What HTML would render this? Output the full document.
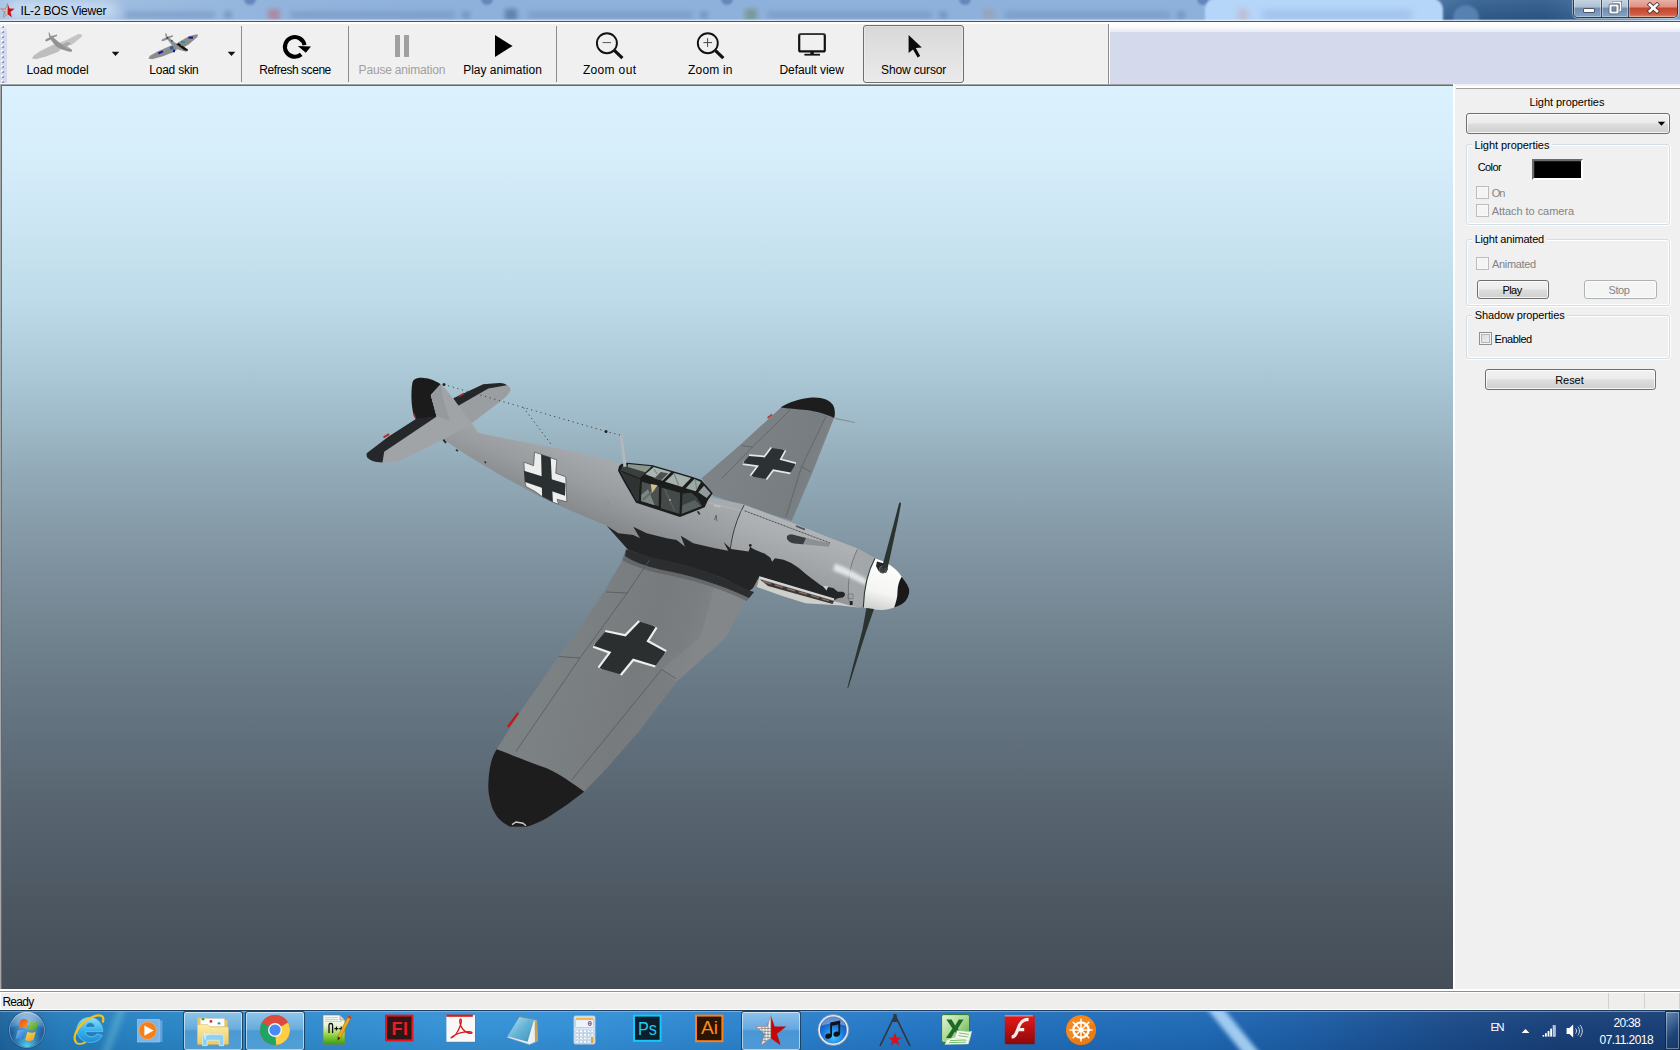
<!DOCTYPE html>
<html lang="en"><head><meta charset="utf-8"><title>IL-2 BOS Viewer</title>
<style>
html,body{margin:0;padding:0;}
body{width:1680px;height:1050px;overflow:hidden;position:relative;background:#f0f0f0;font-family:"Liberation Sans",sans-serif;font-size:12px;color:#000;}
div,span,svg{position:absolute;box-sizing:border-box;}
.t{white-space:pre;font-family:"Liberation Sans",sans-serif;}
.sep{width:1px;background:#8c8c8c;top:26px;height:56px;}
.grp{border:1px solid #d3dde6;border-radius:3px;box-shadow:inset 0 0 0 1px #fff, 0 1px 0 #fff, 1px 0 0 #fff;}
.lbl{background:#f0f0f0;height:12px;}
.btn{border:1px solid #707070;border-radius:3px;background:linear-gradient(#f2f2f2 0,#ebebeb 48%,#dddddd 52%,#cfcfcf 100%);box-shadow:inset 0 0 0 1px rgba(255,255,255,.75);}
.btn.dis{border-color:#adb2b5;background:#f4f4f4;box-shadow:inset 0 0 0 1px #fcfcfc;}
.cb{width:13px;height:13px;border:1px solid #8e8f8f;background:linear-gradient(135deg,#d4d6d8,#f3f3f3);box-shadow:inset 0 0 0 1px #f4f4f4, inset 0 0 0 2px #b4b8bd;}
.cb.dis{border-color:#bcbcbc;background:#f4f4f4;box-shadow:inset 0 0 0 1px #f8f8f8;}
.tb{top:1011px;width:60px;height:40px;border:1px solid rgba(20,50,80,.85);border-radius:3px;background:linear-gradient(180deg,rgba(205,232,252,.6) 0,rgba(160,208,242,.5) 45%,rgba(110,176,226,.46) 50%,rgba(120,186,234,.5) 100%);box-shadow:inset 0 0 0 1px rgba(255,255,255,.55);}

</style></head>
<body>
<!-- ===== Title bar ===== -->
<div id="titlebar" style="left:0;top:0;width:1680px;height:21px;background:linear-gradient(90deg,#a9c5e6 0,#9fbde1 110px,#93b5dd 260px,#8eb1db 420px,#8eb1db 1204px);overflow:hidden;">
  <div style="left:125px;top:11px;width:90px;height:8px;background:#6f8fbc;filter:blur(2.5px);opacity:.5;"></div>
  <div style="left:224px;top:11px;width:8px;height:8px;background:#6484b2;filter:blur(2px);opacity:.55;"></div>
  <div style="left:290px;top:11px;width:165px;height:8px;background:#6f8fbc;filter:blur(2.5px);opacity:.5;"></div>
  <div style="left:462px;top:11px;width:8px;height:8px;background:#6484b2;filter:blur(2px);opacity:.55;"></div>
  <div style="left:528px;top:11px;width:165px;height:8px;background:#6f8fbc;filter:blur(2.5px);opacity:.5;"></div>
  <div style="left:700px;top:11px;width:8px;height:8px;background:#6484b2;filter:blur(2px);opacity:.55;"></div>
  <div style="left:767px;top:11px;width:165px;height:8px;background:#6f8fbc;filter:blur(2.5px);opacity:.5;"></div>
  <div style="left:939px;top:11px;width:8px;height:8px;background:#6484b2;filter:blur(2px);opacity:.55;"></div>
  <div style="left:1005px;top:11px;width:165px;height:8px;background:#6f8fbc;filter:blur(2.5px);opacity:.5;"></div>
  <div style="left:1177px;top:11px;width:8px;height:8px;background:#6484b2;filter:blur(2px);opacity:.55;"></div>
  <div style="left:268px;top:9px;width:12px;height:11px;background:#b8788a;filter:blur(2.5px);opacity:.7;"></div>
  <div style="left:505px;top:9px;width:12px;height:11px;background:#4a6a9c;filter:blur(2.5px);opacity:.7;"></div>
  <div style="left:745px;top:9px;width:12px;height:11px;background:#6f8f7a;filter:blur(2.5px);opacity:.7;"></div>
  <div style="left:983px;top:9px;width:12px;height:11px;background:#9aa0b0;filter:blur(2.5px);opacity:.7;"></div>
  <div style="left:244px;top:-5px;width:12px;height:10px;border-radius:0 0 6px 6px;background:#5c80b6;filter:blur(1.2px);opacity:.85;"></div>
  <div style="left:481px;top:-5px;width:12px;height:10px;border-radius:0 0 6px 6px;background:#5c80b6;filter:blur(1.2px);opacity:.85;"></div>
  <div style="left:721px;top:-5px;width:12px;height:10px;border-radius:0 0 6px 6px;background:#5c80b6;filter:blur(1.2px);opacity:.85;"></div>
  <div style="left:959px;top:-5px;width:12px;height:10px;border-radius:0 0 6px 6px;background:#5c80b6;filter:blur(1.2px);opacity:.85;"></div>
  <div style="left:1197px;top:-5px;width:12px;height:10px;border-radius:0 0 6px 6px;background:#5c80b6;filter:blur(1.2px);opacity:.85;"></div>
  <!-- dark right side -->
  <div style="left:1436px;top:0;width:244px;height:21px;background:linear-gradient(90deg,#3f6c9d 0,#2e5b8c 40px,#2b5789 110px,#3a6797 150px,#4f7cab 200px,#86a9cf 244px);"></div>
  <div style="left:1436px;top:0;width:244px;height:21px;background:linear-gradient(180deg,rgba(255,255,255,.08),rgba(0,0,0,.06));"></div>
  <div style="left:1453px;top:5px;width:26px;height:26px;border-radius:13px;background:#5a86b6;filter:blur(1.5px);opacity:.9;"></div>
  <!-- light active tab behind glass -->
  <div style="left:1205px;top:-2px;width:238px;height:30px;border-radius:12px 12px 0 0;background:#b5d6f9;filter:blur(1.2px);"></div>
  <div style="left:1238px;top:9px;width:10px;height:12px;background:#c9a9b4;filter:blur(3px);opacity:.6;"></div>
  <div style="left:1262px;top:10px;width:150px;height:10px;background:#9fc0e6;filter:blur(3px);opacity:.8;"></div>
  <!-- title glow -->
  <div style="left:8px;top:1px;width:110px;height:18px;border-radius:9px;background:#fff;filter:blur(6px);opacity:.42;"></div>
  <!-- app icon -->
  <svg style="left:-1px;top:3px;" width="18" height="17" viewBox="0 0 18 17">
    <polygon points="8.6,0.4 10.4,5.6 15.6,5.7 11.4,9 12.9,14.3 8.6,11.2 4.3,14.3 5.8,9 1.6,5.7 6.8,5.6" fill="#d00a0e"/>
    <polygon points="8.6,0.4 8.6,11.2 4.3,14.3 5.8,9 1.6,5.7 6.8,5.6" fill="#f4f4f4" stroke="#8a8a8a" stroke-width=".5"/>
    <path d="M3,6.6h5.6M5,8.4h3.6M5.2,10.2h3.4M4.8,12h2.6M6.8,4v8M5,6v7" stroke="#808080" stroke-width=".5" fill="none"/>
  </svg>
  <span class="t" style="left:20.60px;top:5.00px;font-size:12px;line-height:12px;letter-spacing:-0.239px;color:#000;">IL-2 BOS Viewer</span>
  <!-- caption buttons -->
  <div style="left:1573px;top:-1px;width:105px;height:19px;border:1px solid #2a3a52;border-top:none;border-radius:0 0 5px 5px;box-shadow:0 0 0 1px rgba(255,255,255,.45);overflow:hidden;">
    <div style="left:0;top:0;width:28px;height:18px;background:linear-gradient(#c9d6e4 0,#aebfd3 45%,#6f8db0 50%,#86a2c2 100%);border-right:1px solid #3a4a63;box-shadow:inset 0 0 0 1px rgba(255,255,255,.35);"></div>
    <div style="left:28px;top:0;width:27px;height:18px;background:linear-gradient(#c9d6e4 0,#aebfd3 45%,#6f8db0 50%,#86a2c2 100%);border-right:1px solid #3a4a63;box-shadow:inset 0 0 0 1px rgba(255,255,255,.35);"></div>
    <div style="left:55px;top:0;width:49px;height:18px;background:linear-gradient(#ebb6aa 0,#dc9080 45%,#c4432d 50%,#cf5c44 85%,#dc8a68 100%);box-shadow:inset 0 0 0 1px rgba(255,255,255,.3);"></div>
  </div>
  <!-- minimize glyph -->
  <div style="left:1583px;top:8px;width:12px;height:5px;background:#fafafa;border:1px solid #4a5566;border-radius:1px;"></div>
  <!-- restore glyph -->
  <svg style="left:1608px;top:1px;" width="14" height="14" viewBox="0 0 14 14">
    <path d="M4.5,1.5h8v8h-3" fill="none" stroke="#4a5566" stroke-width="3.2" stroke-linejoin="round"/>
    <path d="M4.5,1.5h8v8h-3" fill="none" stroke="#fafafa" stroke-width="1.8" stroke-linejoin="round"/>
    <rect x="2.5" y="4.5" width="7" height="7" fill="none" stroke="#4a5566" stroke-width="3.6" stroke-linejoin="round"/>
    <rect x="2.5" y="4.5" width="7" height="7" fill="none" stroke="#fafafa" stroke-width="2.2" stroke-linejoin="round"/>
  </svg>
  <!-- close glyph -->
  <svg style="left:1646px;top:2px;" width="15" height="12" viewBox="0 0 15 12">
    <path d="M3.8,2.6L11,9.2M11,2.6L3.8,9.2" stroke="#53312c" stroke-width="4.2" stroke-linecap="square"/>
    <path d="M3.8,2.6L11,9.2M11,2.6L3.8,9.2" stroke="#fdfdfd" stroke-width="2.6" stroke-linecap="square"/>
  </svg>
</div>
<div style="left:0;top:19px;width:1680px;height:1px;background:rgba(235,244,255,.3);"></div>
<div style="left:0;top:20px;width:1680px;height:1px;background:rgba(232,240,250,.8);"></div>
<div style="left:0;top:21px;width:1680px;height:1px;background:#46546b;"></div>
<div style="left:0;top:22px;width:1680px;height:2px;background:#fff;"></div>

<!-- ===== Toolbar ===== -->
<div id="toolbar" style="left:0;top:24px;width:1108px;height:60px;background:#f0f0f0;"></div>
<div style="left:1108px;top:24px;width:1px;height:60px;background:#8c8c8c;"></div>
<div style="left:1109px;top:24px;width:1px;height:60px;background:#fff;"></div>
<div style="left:1110px;top:24px;width:570px;height:60px;background:linear-gradient(#fff 0,#fafbfd 3px,#e6eaf5 8px,#d4d9ec 8.5px,#d4d9ec 100%);"></div>
<!-- gripper -->
<div style="left:0;top:24px;width:7px;height:60px;background:linear-gradient(#f4f5fa 0,#d6dbee 8px,#d4d9ec 100%);"></div>
<svg style="left:0;top:24px;" width="7" height="60" viewBox="0 0 7 60">
  <defs><pattern id="grip" x="0" y="1" width="7" height="5" patternUnits="userSpaceOnUse">
    <rect x="1" y="0" width="2" height="2" fill="#fff"/><rect x="2" y="1" width="2" height="2" fill="#9197ad"/><rect x="2" y="1" width="1" height="1" fill="#c4c8d8"/></pattern></defs>
  <rect x="0" y="1" width="7" height="58" fill="url(#grip)"/>
</svg>
<!-- Load model icon -->
<svg style="left:28px;top:30px;" width="58" height="32" viewBox="28 30 58 32">
  <polygon points="32,58.6 33.5,55.8 40,51.2 53.5,44.6 60.5,46 61,49 58,52 46.5,56.2 36,59.2" fill="#bebebe"/>
  <polygon points="60,42.6 66.5,40 78.5,34 82.2,34.4 81.5,37 72,44.4 66,46.2 61,46.6" fill="#c4c4c4"/>
  <polygon points="48.6,32 50,33.5 50.6,36 53.6,35.6 56.8,34.6 57.2,36 53.4,37.6 58,41.6 61.5,44 68,47.6 71.8,49.6 72.2,51.6 69.5,51.8 62,49.6 57,47 54.5,44.4 50.6,39.4 46.5,41.4 45,40.6 46,39 49.4,37.6 48.8,35" fill="#929292"/>
  <polygon points="62,44.6 67.5,42 71,43.6 67,46 70,48.6 67,48.8" fill="#a8a8a8"/>
</svg>
<!-- Load skin icon -->
<svg style="left:145px;top:30px;" width="58" height="32" viewBox="145 30 58 32">
  <polygon points="148.4,58.6 150,55.8 158,51.2 171.8,45.2 177,47.6 176.6,50 173,52.2 163,56.2 152,59.2" fill="#8c8c8c"/>
  <polygon points="178,42.4 188.4,36.4 195.5,34.4 198,34.6 197.4,37 188.6,44.6 183.4,47.6 178,46.4" fill="#8c8c8c"/>
  <polygon points="165.4,33 166.8,34 167.2,36.6 170.4,36 172.6,35 173,36.4 169.6,38 173.6,41.6 177.5,44.4 184,48 187.6,50 187.4,51.6 185,51.4 178,49.4 173.5,47 170.6,43.6 167.6,39.6 162.6,41.2 161.2,40.4 162.6,39 166,37.6 165.2,35" fill="#909090"/>
  <polygon points="176,44 178.4,43 188,49.4 187.2,51 184,50" fill="#141414"/>
  <rect x="188.5" y="36.6" width="4.5" height="2" fill="#15159c"/><rect x="181" y="41.4" width="4" height="1.6" fill="#2b86a0"/>
  <rect x="158" y="51.6" width="5" height="2" fill="#15159c" transform="rotate(-22 160 52)"/><rect x="170" y="46.4" width="3.4" height="3" fill="#1f5f9c"/>
  <rect x="173" y="49.6" width="2" height="2.6" fill="#15159c"/><rect x="166.6" y="37.2" width="1.6" height="1.4" fill="#15159c"/><rect x="171" y="40" width="1.6" height="1.6" fill="#1a6a4a"/>
  <rect x="181" y="44.6" width="2" height="1.4" fill="#5a8a3a"/>
</svg>
<!-- dropdown arrows -->
<svg style="left:111px;top:51px;" width="9" height="6" viewBox="0 0 9 6"><polygon points="0.7,0.8 8.3,0.8 4.5,5" fill="#111"/></svg>
<svg style="left:227px;top:51px;" width="9" height="6" viewBox="0 0 9 6"><polygon points="0.7,0.8 8.3,0.8 4.5,5" fill="#111"/></svg>
<div class="sep" style="left:241px;"></div>
<div class="sep" style="left:348px;"></div>
<div class="sep" style="left:556px;"></div>
<!-- Refresh icon -->
<svg style="left:280px;top:32px;" width="34" height="30" viewBox="280 32 34 30">
  <path d="M 304.5,45.2 A 9.85 9.85 0 1 0 301.2,54.4" fill="none" stroke="#000" stroke-width="4.1"/>
  <polygon points="297.8,46 311,46.4 305.8,52.8" fill="#000"/>
</svg>
<!-- Pause icon -->
<div style="left:395px;top:35px;width:5px;height:22px;background:#a0a0a0;"></div>
<div style="left:404px;top:35px;width:5px;height:22px;background:#a0a0a0;"></div>
<!-- Play icon -->
<svg style="left:494px;top:34px;" width="20" height="24" viewBox="494 34 20 24"><polygon points="495,35 495,57 512.6,46" fill="#000"/></svg>
<!-- Zoom out icon -->
<svg style="left:594px;top:30px;" width="32" height="32" viewBox="594 30 32 32">
  <circle cx="606.9" cy="43.2" r="10" fill="none" stroke="#111" stroke-width="1.9"/>
  <path d="M614.6,50.6 L622.4,58.2" stroke="#111" stroke-width="3.2"/>
  <path d="M602.5,42.6 H611" stroke="#555" stroke-width="1"/>
</svg>
<!-- Zoom in icon -->
<svg style="left:695px;top:30px;" width="32" height="32" viewBox="695 30 32 32">
  <circle cx="707.8" cy="43.2" r="10" fill="none" stroke="#111" stroke-width="1.9"/>
  <path d="M715.5,50.6 L723.3,58.2" stroke="#111" stroke-width="3.2"/>
  <path d="M703.4,42.6 H712 M707.6,38.2 V47" stroke="#444" stroke-width="1"/>
</svg>
<!-- Monitor icon -->
<svg style="left:796px;top:31px;" width="32" height="26" viewBox="796 31 32 26">
  <rect x="799.2" y="34" width="25.6" height="17.4" rx="1.5" fill="none" stroke="#111" stroke-width="2.2"/>
  <rect x="798.4" y="33.4" width="27.2" height="1" fill="#f0f0f0" opacity=".4"/>
  <rect x="810.4" y="52" width="3.4" height="2.4" fill="#111"/>
  <rect x="804.4" y="53.8" width="15.6" height="1.8" fill="#111"/>
</svg>
<!-- Show cursor (checked button) -->
<div style="left:863px;top:25px;width:101px;height:58px;border:1px solid #6f6f6f;border-radius:3px;background:linear-gradient(#cfcfcf 0,#d9d9d9 6%,#dedede 30%,#e3e3e3 60%,#eaeaea 100%);box-shadow:inset 0 0 0 1px rgba(255,255,255,.35);"></div>
<svg style="left:905px;top:33px;" width="20" height="26" viewBox="905 33 20 26">
  <polygon points="908.6,35 908.6,53 913,49.4 917.6,57.4 920.2,56 915.8,48 921.8,47.4" fill="#0a0a0a"/>
</svg>
<span class="t" style="left:26.40px;top:64.00px;font-size:12px;line-height:12px;letter-spacing:-0.035px;color:#000;">Load model</span>
<span class="t" style="left:149.30px;top:64.00px;font-size:12px;line-height:12px;letter-spacing:-0.234px;color:#000;">Load skin</span>
<span class="t" style="left:259.30px;top:64.00px;font-size:12px;line-height:12px;letter-spacing:-0.448px;color:#000;">Refresh scene</span>
<span class="t" style="left:358.60px;top:64.00px;font-size:12px;line-height:12px;letter-spacing:-0.185px;color:#a0a0a0;">Pause animation</span>
<span class="t" style="left:463.20px;top:64.00px;font-size:12px;line-height:12px;letter-spacing:-0.001px;color:#000;">Play animation</span>
<span class="t" style="left:582.90px;top:64.00px;font-size:12px;line-height:12px;letter-spacing:0.344px;color:#000;">Zoom out</span>
<span class="t" style="left:688.00px;top:64.00px;font-size:12px;line-height:12px;letter-spacing:0.192px;color:#000;">Zoom in</span>
<span class="t" style="left:779.50px;top:64.00px;font-size:12px;line-height:12px;letter-spacing:-0.096px;color:#000;">Default view</span>
<span class="t" style="left:881.10px;top:64.00px;font-size:12px;line-height:12px;letter-spacing:-0.149px;color:#000;">Show cursor</span>
<div style="left:0;top:83px;width:1108px;height:1px;background:#f7f7f7;"></div>
<div style="left:0;top:84px;width:1453px;height:1px;background:#a2a2a2;"></div>
<div style="left:1px;top:85px;width:1452px;height:1px;background:#6a6a6a;"></div>

<!-- ===== 3D viewport ===== -->
<div style="left:0;top:84px;width:1px;height:906px;background:#a6a6a6;"></div>
<div style="left:1px;top:85px;width:1px;height:904px;background:#6a6a6a;"></div>
<div id="viewport" style="left:2px;top:86px;width:1451px;height:903px;background:linear-gradient(180deg,#dcf1fe 0%,#d6edfa 8%,#cbe5f2 16%,#bddbe9 23.7%,#a8c5d3 33.2%,#92aab8 42.7%,#8093a0 52.3%,#6f818d 61.9%,#61717d 71.4%,#56636e 81%,#4c5762 90.5%,#454e58 100%);overflow:hidden;">
<svg style="left:0;top:0;" width="1451" height="903" viewBox="2 86 1451 903">
<defs>
  <linearGradient id="gFus" gradientUnits="userSpaceOnUse" x1="676" y1="458" x2="644" y2="542">
    <stop offset="0" stop-color="#b1b5b7"/><stop offset=".3" stop-color="#a6aaad"/><stop offset=".65" stop-color="#989c9f"/><stop offset="1" stop-color="#84888b"/>
  </linearGradient>
  <linearGradient id="gCowl" gradientUnits="userSpaceOnUse" x1="815" y1="520" x2="790" y2="600">
    <stop offset="0" stop-color="#b4b8bb"/><stop offset=".35" stop-color="#a9adb0"/><stop offset=".7" stop-color="#9b9fa2"/><stop offset="1" stop-color="#84888b"/>
  </linearGradient>
  <linearGradient id="gWingR" gradientUnits="userSpaceOnUse" x1="740" y1="440" x2="830" y2="470">
    <stop offset="0" stop-color="#7d8286"/><stop offset=".7" stop-color="#787d81"/><stop offset="1" stop-color="#80858a"/>
  </linearGradient>
  <linearGradient id="gWingL" gradientUnits="userSpaceOnUse" x1="560" y1="650" x2="690" y2="690">
    <stop offset="0" stop-color="#7c8184"/><stop offset=".6" stop-color="#777b7e"/><stop offset=".85" stop-color="#7a7e81"/><stop offset="1" stop-color="#7f8386"/>
  </linearGradient>
  <linearGradient id="gSpin" gradientUnits="userSpaceOnUse" x1="885" y1="560" x2="870" y2="612">
    <stop offset="0" stop-color="#ffffff"/><stop offset=".6" stop-color="#f4f4f2"/><stop offset="1" stop-color="#c8cac8"/>
  </linearGradient>
  <filter id="blur1" x="-20%" y="-40%" width="140%" height="180%"><feGaussianBlur stdDeviation="1.6"/></filter>
</defs>

<!-- right (far) wing -->
<path d="M701.7,478.3 L740,445 L778.3,410 L781.7,406.7 L835,412 L834.2,417.5 L812.1,473.3 L791.7,521 L745,506 L713.3,496 Z" fill="url(#gWingR)"/>
<path d="M781.7,406.7 C788,402.5 800,398.6 811.7,397.5 C822,396.8 830,400 833,405 C835.2,409 835.2,413.5 834.2,418 C828,414.5 815,411 806.7,410 C797,409 788,408.5 781,407.4 Z" fill="#1d1d1e"/>
<path d="M790,410 L752.5,447 L741.5,445.5 M752.5,447 L722,478 M826,416 L801.6,466.7 L811,472 M801.6,466.7 L786,517" fill="none" stroke="#5c6165" stroke-width=".8"/>
<path d="M835,418.3 L855,422.5" stroke="#8a8f92" stroke-width="1.2"/>
<path d="M767.6,418 l4.6,-3.6" stroke="#b83a3a" stroke-width="1.8"/>
<!-- wing cross (far wing) -->
<g>
  <path d="M749.0,456.0 L764.8,457.4 L771.9,447.9 M784.8,450.0 L779.5,459.8 L795.7,464.0 M790.5,472.6 L772.9,469.3 L765.7,479.0 M751.0,476.2 L759.0,465.5 L742.9,463.3" fill="none" stroke="#e4e7e7" stroke-width="3.4" stroke-linejoin="miter"/>
  <polygon points="771.9,447.9 784.8,450.0 779.5,459.8 795.7,464.0 790.5,472.6 772.9,469.3 765.7,479.0 751.0,476.2 759.0,465.5 742.9,463.3 749.0,456.0 764.8,457.4" fill="#2c3233"/>
</g>


<!-- far horizontal stabilizer -->
<path d="M453.3,399 L483.3,384.2 L500,383 C505,383.2 509,385 510.8,389.6 C510,393 505,398 500,401.7 L471.7,423.3 L462,414 Z" fill="#9a9ea1"/>
<path d="M453.3,398.3 L483.3,384.2 L500,383 C503,383 505.5,384 506.7,385.2 L488.3,388.6 L458.3,405.8 Z" fill="#242629"/>
<path d="M458.5,396.5 l5.5,-3" stroke="#a82a2a" stroke-width="1.6"/>
<!-- rudder (black) + fin -->
<path d="M412.5,382.2 C414,378.6 418,377.6 422,377.8 C427,378 433.3,379.4 440.8,384.2 L430.8,395 L436.7,416.7 L416.7,419.4 C414,417.5 413.6,415 413.3,413.3 C411.5,406 410.6,392 412.5,382.2 Z" fill="#1b1b1c"/>
<path d="M413.5,413 l2.4,6" stroke="#a82a2a" stroke-width="1.2"/>
<path d="M440.8,384.2 L430.8,395 L436.7,416.7 L465,426.7 L471.7,423.3 L456.7,403.3 L445,388.3 Z" fill="#a0a4a7"/>
<path d="M440.8,384.2 L430.8,395 L436.7,416.7 L450,421.5 L443,398 Z" fill="#96999d"/>
<!-- near horizontal stabilizer -->
<path d="M384.2,451.7 L436.7,416.2 L466,426.2 L443.3,439.2 L401.7,460 C397,462 393,462.6 390,462.5 L382.5,462.5 Z" fill="#a0a4a7"/>
<path d="M366.7,453.3 C366.2,456 367,457.6 368.3,458.6 C370.5,460.4 373.5,461.6 376.7,462 L382.5,462.5 L384.2,451.7 L436.7,416.4 L416.7,418.6 L388.3,436.7 Z" fill="#25272a"/>
<path d="M383.5,437.5 l5.5,-3.4" stroke="#b02a2a" stroke-width="2"/>

<!-- fuselage -->
<path id="fus" d="M471.7,423.3 L476,429.5 C477.5,432 479,433 482,433.8 L516.7,440.8 L566.7,450 L600,457.5 L619.2,463.3 L660,470 L706.7,496.7 L743.3,504.2 L793.3,523.3 L830,538 L856.7,548.3 L875,558.3 L869,580 L863.3,607.5 L841.7,605.2 L805.5,603.1 L781.7,595.5 L768.3,590.7 L756.9,586.9 L753.1,587.9 L748.3,591.7 L723.3,578.3 L690,566.7 L656.7,560 L628.3,550 L606.7,525.8 L573.3,511.7 L540,496.7 L500,475 L466.7,455 L443.3,439.2 L465,426.7 Z" fill="url(#gFus)"/>
<!-- cowling (front of panel arc) lighter -->
<path d="M744.2,505 L793.3,523.3 L830,538 L856.7,548.3 L875,558.3 L869,580 L863.3,607.5 L841.7,605.2 L805.5,603.1 L781.7,595.5 L768.3,590.7 L756.9,586.9 L753.1,587.9 L748.3,591.7 L729.2,563.3 C729.5,548 733,525 744.2,505 Z" fill="url(#gCowl)"/>
<!-- cowl ring -->
<path d="M857.5,549.2 L875,558.3 C869,572 865,592 863.3,607.5 L850,605.6 C846.5,590 848.5,566 857.5,549.2 Z" fill="#a3a7aa"/>
<path d="M857.5,549.2 C848.5,566 846.5,590 850,605.6" fill="none" stroke="#6f7477" stroke-width=".9"/>
<path d="M835,563.600 C845,567 856,573 867,579.600 L865.600,585.600 C854,579.600 843,574 833,570.600 Z" fill="#f4f6f6" opacity=".78" filter="url(#blur1)"/>
<path d="M744.2,505 C733,525 729.5,548 729.2,563.3" fill="none" stroke="#3c4042" stroke-width="1"/>
<!-- black flame camouflage -->
<path d="M606.7,525.8 L618.3,533.3 L633.3,535 L640,538.3 L633.3,526.7 L646.7,533.3 L666.7,538.3 L676.7,540 L685,546.7 L680.8,535.8 L693.3,543.3 L715,548.3 L728.3,550.7 L723.6,542.1 L731,549 L748.6,551.4 L750.2,546.6 L751.7,547.9 L755,549.8 L764.5,553.6 L770.2,557.4 L772.1,561.7 L775,558.3 L783.6,559.8 L791.2,563.1 L798.8,567.9 L806.4,574.5 L814,580.2 L821.7,586 L833.1,587.9 L837.9,591.7 L842.6,591.7 C844.4,592.4 845,593.4 845,594.5 C844.8,596 844,597 842.6,597.4 L837.9,598.3 L834,600.2 L759.3,576.4 L753.1,587.9 L748.3,591.7 L723.3,578.3 L690,566.7 L656.7,560 L628.3,550 Z" fill="#232425"/>
<circle cx="750.3" cy="545.4" r="1.4" fill="#232425"/>
<polygon points="822.6,586 828.4,586 826.6,590.6" fill="#c9cccb"/>
<!-- wing-root shadow -->
<path d="M628.3,550 L656.7,560 L690,566.7 L723.3,578.3 L748.3,591.7 L752.9,593 L746,601 L720,589 L688,577 L655,569 L627,556 Z" fill="#2a2b2c"/>
<!-- belly -->
<path d="M759,579 L834,601 L850,605.6 L861.7,607.9 L841.7,605.4 L805.5,603.3 L781.7,595.700 L768.3,590.900 L756.9,587.100 Z" fill="#cdd0ca"/>
<!-- exhaust stacks -->
<path d="M759.4,576.2 L834.4,598.4 L833.8,600.6 L759,578.6 Z" fill="#d4d7d4"/>
<path d="M760,579.4 L834,601 L832.6,604 L768,586 Z" fill="#3c3634"/>
<path d="M763,581.4 l8,2.4 M775,585 l8,2.4 M787,588.6 l8,2.4 M799,592 l8,2.4 M811,595.4 l8,2.400 M822,598.8 l7,2" stroke="#8a6e64" stroke-width="1.4"/>
<path d="M848,594 h5 v4.6 h-5 z" fill="none" stroke="#6c7073" stroke-width=".7"/>
<rect x="850" y="601" width="2.6" height="4" fill="#222"/>
<!-- gun trough -->
<path d="M787,536.4 C788.4,534.4 791.6,534 796,535.4 L830,543.6 L829,546.8 L795,543.6 C790,542.6 786,540 787,536.4 Z" fill="#8c9093"/>
<path d="M787,536.4 C788.4,534.4 791.6,534 796,535.4 L806,538 L803,544.2 L795,543.6 C790,542.6 786,540 787,536.4 Z" fill="#3a3d3f"/>
<path d="M744.6,510.8 L830,543" fill="none" stroke="#3e4244" stroke-width=".9" stroke-dasharray="2.2 1"/>
<path d="M796,526 l9,3.6" stroke="#4a4e50" stroke-width="1.6"/>
<path d="M706,502 l36,9" fill="none" stroke="#c9cccd" stroke-width=".6" stroke-dasharray="1.4 1.2"/>
<rect x="714" y="504" width="7" height="2.4" fill="#b9bdbf" transform="rotate(12 714 504)"/>
<path d="M714.6,520 l1.6,-5 l.6,6" fill="none" stroke="#5d6a5a" stroke-width="1"/>
<path d="M711,517.6 l1.6,.8" stroke="#d89a9a" stroke-width="1.2"/>
<path d="M697.6,511.4 l2.2,3" stroke="#222" stroke-width="1.6"/>
<!-- tail details -->
<path d="M484.6,461.4 l1.4,1.6" stroke="#2a2a2a" stroke-width="1.4"/>
<path d="M443.3,439.6 L446,443" fill="none" stroke="#2b2b2c" stroke-width="2"/><path d="M456,449.6 l2,1.6" stroke="#2b2b2c" stroke-width="1.6"/>
<circle cx="607" cy="504" r="2.6" fill="none" stroke="#8b8f92" stroke-width=".8"/>

<!-- fuselage cross -->
<g>
  <polygon points="523.9,462.1 533.6,465.7 534.6,452.1 556.8,460 555.7,473.2 565.700,476.8 566.8,501.8 557.1,499.3 558.6,504.3 552.9,502.1 542.1,496.4 535,491.4 526,486.4 525,482.1" fill="#eceeee" stroke="#3a3e40" stroke-width=".6"/>
  <polygon points="541.1,454.6 550.7,457.5 552.9,502.1 542.1,496.4" fill="#2a3031"/>
  <polygon points="523.9,470.7 565.4,483.6 565,495.700 525,482.1" fill="#2a3031"/>
</g>

<!-- canopy -->
<polygon points="618.0,470.7 619.0,466.3 621.3,464.0 627.3,462.7 652.7,465.3 673.3,471.3 692.7,477.0 701.3,480.0 706.7,486.0 712.7,493.3 708.0,500.0 704.7,507.3 680.0,517.0 636.0,502.7 623.3,480.7" fill="#1b1d1d"/>
<polygon points="620.3,471.3 622.3,466.3 628.0,465.0 650.7,467.7 640.0,478.0 638.3,501.3 636.7,500.7 625.0,480.0" fill="#3a3e3d"/>
<polygon points="628.0,464.0 651.7,466.3 645.3,472.3 628.0,467.0" fill="#8a968d"/>
<polygon points="622.3,472.0 639.3,478.7 638.3,501.3 636.7,500.7 625.0,480.0" fill="#2f3332"/>
<path d="M621.3,471.3 L640.0,478.7" stroke="#1b1d1d" stroke-width="1.2"/>
<polygon points="645.3,474.3 653.7,467.0 671.0,472.0 662.3,480.7" fill="#a9b5b0"/>
<polygon points="654.0,478.7 660.7,472.0 668.3,473.2 661.3,480.3" fill="#4c5150"/>
<polygon points="665.0,481.7 674.3,473.0 691.0,478.0 682.3,487.0" fill="#a6b2ae"/>
<polygon points="685.7,488.3 694.3,479.0 701.0,482.0 695.7,491.3" fill="#9ca8a4"/>
<polygon points="698.3,492.3 704.0,485.7 710.7,493.3 706.7,498.0" fill="#8f9c99"/>
<path d="M654.0,469.3 L657.3,474.0 M674.0,473.3 L678.7,485.3 M695.3,480.0 L696.7,489.3" stroke="#7d8986" stroke-width="1.300" fill="none"/>
<polygon points="641.9,481.7 659.0,486.8 658.7,506.3 641.0,501.0" fill="#4b5150"/>
<polygon points="641.3,494.7 648.0,489.3 654.7,505.3 641.1,501.0" fill="#7c8683"/>
<path d="M642.7,500.0 L654.7,489.3" stroke="#646c6a" stroke-width="2.2"/>
<polygon points="650.7,484.0 657.7,485.3 652.0,492.7" fill="#d1bd8a"/>
<polygon points="661.5,487.5 680.2,492.8 679.5,514.0 660.9,508.3" fill="#444a49"/>
<path d="M664.7,489.3 L674.7,510.7" stroke="#5a6261" stroke-width="1.200"/>
<rect x="669.0" y="499.0" width="1.800" height="1.800" fill="#b8a67e"/>
<polygon points="682.5,493.5 691.3,492.8 696.7,497.3 702.3,506.0 681.5,514.0" fill="#3b4140"/>
<polygon points="682.5,505.3 694.7,500.0 701.3,506.0 681.7,513.7" fill="#59615f"/>

<!-- antenna mast and wires -->
<path d="M620,435.4 L622.4,435.2 L626.6,466.6 L623.4,467 Z" fill="#b4b8ba"/>
<path d="M443.5,384.4 L606,431.4 L620.8,435.2" fill="none" stroke="#33373a" stroke-width=".9" stroke-dasharray="1.2 3.6"/>
<path d="M523.4,407.6 L551.7,445" fill="none" stroke="#33373a" stroke-width=".9" stroke-dasharray="1.2 3.2"/>
<circle cx="444" cy="384.6" r="1.5" fill="#222"/><circle cx="606" cy="431.4" r="1.5" fill="#222"/>

<!-- left (near) wing -->
<path d="M627.2,552 L650.7,559.6 L690,568.6 L723,580.6 L748,593.4 L752.9,593 L743.1,604.8 L725.4,638.2 L676.5,681.7 L640,730 L606.7,768.3 L584.2,791.7 L566.7,805 L546.7,818.3 C538,823 530,826 526.7,826.7 L510,826.7 C505,824.5 501,821.5 498.3,818.3 C494,813 491.5,806.5 490.8,803.3 C488.5,795 488,789 488.3,783.3 C488.6,776 489.5,769 490.8,763.3 C492,758 494,753.5 496.7,749.2 L519.7,712.5 L558.4,656.9 L581.7,625 L605.6,589.1 Z" fill="url(#gWingL)"/>
<path d="M716.4,577.8 L748,593.4 L752.9,593 L743.1,604.8 L725.4,638.2 L676.5,681.7 L661.6,669.4 L701.2,636 Z" fill="#909497" opacity=".28"/>
<path d="M626,549.4 L650.7,557.2 L690,566.2 L723,578.2 L749,590.600 L754,592 L746.5,601 C720,588 690,579.5 660,573.6 C645,570 630,565 622,560 Z" fill="#4a4d50" opacity=".45"/>
<path d="M626,549.4 L650.7,557.2 L690,566.2 L723,578.2 L749,590.600 L754,592 L749,598 C720,584 690,575 660,569.4 C645,566 633,561.4 625,556 Z" fill="#2b2d2f"/>
<!-- wing tip black -->
<path d="M496.7,749.2 C505,752 512,755 520,758.3 C529,762 538,765 546.7,768.3 C555,772 563,777 570,781.7 C575,785 580,788.5 584.2,791.7 L566.7,805 L546.7,818.3 C538,823 530,826 526.7,826.7 L510,826.7 C505,824.5 501,821.5 498.3,818.3 C494,813 491.5,806.5 490.8,803.3 C488.5,795 488,789 488.3,783.3 C488.6,776 489.5,769 490.8,763.3 C492,758 494,753.5 496.7,749.2 Z" fill="#1d1d1e"/>
<path d="M512,824.6 l4,-2.6 l7,1.2 l3,2.6" fill="none" stroke="#c9cdc9" stroke-width="1.4"/>
<!-- wing panel lines -->
<path d="M649.8,559.6 L627.2,593 L606,592 M627.2,593 L580,657.9 L558.6,656.6 M580,657.9 L515.8,751.7" fill="none" stroke="#55595c" stroke-width=".8"/>
<path d="M661.6,669.4 L676,678.6 M661.6,669.4 L571.7,780" fill="none" stroke="#55595c" stroke-width=".8"/>
<path d="M518.2,712.8 L508,727" stroke="#c11a1a" stroke-width="2.2"/>
<!-- near wing cross -->
<g>
  <path d="M605.0,632.1 L625.7,636.4 L640.0,621.8 M655.7,626.8 L646.4,641.4 L665.7,652.1 M655.7,665.4 L632.9,658.6 L620.0,674.3 M599.3,668.2 L611.4,652.1 L593.6,645.7" fill="none" stroke="#eceeee" stroke-width="4.4" stroke-linejoin="miter"/>
  <polygon points="640.0,621.8 655.7,626.8 646.4,641.4 665.7,652.1 655.7,665.4 632.9,658.6 620.0,674.3 599.3,668.2 611.4,652.1 593.6,645.7 605.0,632.1 625.7,636.4" fill="#2b2f30"/>
</g>


<!-- spinner -->
<path d="M875,558.3 C880,560 886,562.6 890,565 C895,568.4 899,572.6 901.7,576.7 C905,581 907.5,584.4 908.3,586.7 C909.6,589.4 909.6,591.6 909.2,593.3 C908.4,597 907,599.6 905,601.7 C902,604.6 898,606.4 894.2,607.5 C890,609 886,609.8 881.7,610 C875,610 869,609 863.3,607.5 C863.8,592 867.5,572 875,558.3 Z" fill="url(#gSpin)"/>
<path d="M901.7,576.7 C905,581 907.5,584.4 908.3,586.7 C909.6,589.4 909.6,591.6 909.2,593.3 C908.4,597 907,599.6 905,601.7 C902,604.6 898,606.4 894.2,607.5 C896,602 897.6,597 897.5,591.7 C897.6,586 899,581 901.7,576.7 Z" fill="#19191a"/>
<path d="M875,558.3 C867.5,572 863.8,592 863.3,607.5" fill="none" stroke="#2a3a2e" stroke-width="1.1"/>
<!-- prop hub & blades -->
<path d="M877,561.6 L884,563.6 L888,569 L886,573 L878.6,571 L876,566 Z" fill="#222425"/>
<circle cx="882.8" cy="569.6" r="3.6" fill="#3a3e3e" stroke="#6a6e6e" stroke-width=".8"/>
<path d="M900.4,502 L901,504 L898,520 L887.6,568.6 L881.8,568 L893.4,525 L899,503.4 Z" fill="#2b3331"/>
<path d="M866.4,608 L874,609 L865.6,633.3 L852,676 L848,688.4 L847.4,687.6 L852.4,668 L862.4,630 Z" fill="#2b3331"/>
</svg>
</div>
<div style="left:1453px;top:84px;width:2px;height:906px;background:#fff;"></div>

<!-- ===== Right panel ===== -->
<div id="panel" style="left:1455px;top:84px;width:225px;height:906px;background:#f0f0f0;"></div>
<div style="left:1456px;top:86px;width:1224px;height:2px;background:#fff;"></div>
<div style="left:1456px;top:88px;width:224px;height:1px;background:#a0a0a0;"></div>
<span class="t" style="left:1529.40px;top:97.00px;font-size:11px;line-height:11px;letter-spacing:-0.055px;color:#000;">Light properties</span>
<!-- combo -->
<div class="btn" style="left:1466px;top:113px;width:204px;height:21px;"></div>
<svg style="left:1657px;top:121px;" width="9" height="6" viewBox="0 0 9 6"><polygon points="0.8,0.8 8.2,0.8 4.5,4.8" fill="#000"/></svg>
<!-- group 1 -->
<div class="grp" style="left:1466px;top:144px;width:204px;height:81px;"></div>
<div class="lbl" style="left:1472px;top:140px;width:80px;"></div>
<span class="t" style="left:1474.40px;top:140.00px;font-size:11px;line-height:11px;letter-spacing:-0.055px;color:#000;">Light properties</span>
<span class="t" style="left:1477.70px;top:162.00px;font-size:11px;line-height:11px;letter-spacing:-0.572px;color:#000;">Color</span>
<div style="left:1532px;top:159px;width:51px;height:21px;background:#000;border:2px solid;border-color:#6b6b6b #fff #fff #6b6b6b;box-shadow:inset 1px 1px 0 #1a1a1a;"></div>
<div class="cb dis" style="left:1476px;top:186px;"></div>
<span class="t" style="left:1491.80px;top:188.00px;font-size:11px;line-height:11px;letter-spacing:-1.174px;color:#838383;">On</span>
<div class="cb dis" style="left:1476px;top:204px;"></div>
<span class="t" style="left:1491.80px;top:206.00px;font-size:11px;line-height:11px;letter-spacing:-0.063px;color:#838383;">Attach to camera</span>
<!-- group 2 -->
<div class="grp" style="left:1466px;top:239px;width:204px;height:67px;"></div>
<div class="lbl" style="left:1472px;top:234px;width:75px;"></div>
<span class="t" style="left:1474.70px;top:234.00px;font-size:11px;line-height:11px;letter-spacing:-0.205px;color:#000;">Light animated</span>
<div class="cb dis" style="left:1476px;top:257px;"></div>
<span class="t" style="left:1492.00px;top:259.00px;font-size:11px;line-height:11px;letter-spacing:-0.324px;color:#838383;">Animated</span>
<div class="btn" style="left:1477px;top:280px;width:72px;height:19px;"></div>
<span class="t" style="left:1502.40px;top:285.00px;font-size:11px;line-height:11px;letter-spacing:-0.533px;color:#000;">Play</span>
<div class="btn dis" style="left:1584px;top:280px;width:73px;height:19px;"></div>
<span class="t" style="left:1608.40px;top:285.00px;font-size:11px;line-height:11px;letter-spacing:-0.343px;color:#838383;">Stop</span>
<!-- group 3 -->
<div class="grp" style="left:1466px;top:315px;width:204px;height:44px;"></div>
<div class="lbl" style="left:1472px;top:310px;width:95px;"></div>
<span class="t" style="left:1474.70px;top:310.00px;font-size:11px;line-height:11px;letter-spacing:-0.108px;color:#000;">Shadow properties</span>
<div class="cb" style="left:1479px;top:332px;"></div>
<span class="t" style="left:1494.60px;top:334.00px;font-size:11px;line-height:11px;letter-spacing:-0.462px;color:#000;">Enabled</span>
<div class="btn" style="left:1485px;top:369px;width:171px;height:21px;"></div>
<span class="t" style="left:1555.20px;top:375.00px;font-size:11px;line-height:11px;letter-spacing:-0.059px;color:#000;">Reset</span>

<!-- ===== Status bar ===== -->
<div style="left:0;top:989px;width:1680px;height:2px;background:#fff;"></div>
<div style="left:0;top:991px;width:1680px;height:1px;background:#8f8f8f;"></div>
<div style="left:0;top:992px;width:1680px;height:1px;background:#fff;"></div>
<div id="status" style="left:0;top:993px;width:1680px;height:16px;background:#f0eded;"></div>
<div style="left:0;top:993px;width:1px;height:16px;background:#fff;"></div>
<div style="left:1608px;top:993px;width:1px;height:16px;background:#d2d0d0;"></div>
<div style="left:1644px;top:993px;width:1px;height:16px;background:#d2d0d0;"></div>
<div style="left:1679px;top:993px;width:1px;height:16px;background:#d2d0d0;"></div>
<div style="left:0;top:1009px;width:1680px;height:1px;background:#fff;"></div>
<span class="t" style="left:2.40px;top:996.00px;font-size:12px;line-height:12px;letter-spacing:-0.722px;color:#000;">Ready</span>

<!-- ===== Taskbar ===== -->
<div id="taskbar" style="left:0;top:1010px;width:1680px;height:40px;background:linear-gradient(90deg,#1d639c 0,#247cbb 60px,#2a87c7 200px,#3591d5 450px,#328ed5 600px,#2a81cc 760px,#2476c4 900px,#206dba 1050px,#1e68b4 1200px,#1c5ba2 1320px,#1a4a88 1450px,#183f78 1560px,#173d75 1680px);overflow:hidden;">
  <div style="left:0;top:0;width:1680px;height:40px;background:linear-gradient(180deg,rgba(255,255,255,.05) 0,rgba(255,255,255,.01) 45%,rgba(0,0,0,.06) 100%);"></div>
  <!-- light streaks -->
  <div style="left:109px;top:-12px;width:8px;height:70px;background:rgba(150,225,225,.28);transform:rotate(20deg);filter:blur(2.5px);"></div>
  <div style="left:1226px;top:-25px;width:13px;height:90px;background:rgba(176,216,250,.88);transform:rotate(-39deg);filter:blur(2.2px);"></div>
  
  <div style="left:0;top:0;width:1680px;height:1px;background:#1b3f63;"></div>
  <div style="left:0;top:1px;width:1680px;height:1px;background:rgba(160,205,240,.55);"></div>
</div>
<!-- active / running task buttons -->
<div class="tb" style="left:183px;"></div>
<div class="tb" style="left:245px;"></div>
<div class="tb" style="left:741px;"></div>
<svg style="left:0;top:1010px;" width="1680" height="40" viewBox="0 1010 1680 40">
<defs>
  <radialGradient id="orbG" cx=".5" cy=".35" r=".7"><stop offset="0" stop-color="#6fb4e6"/><stop offset=".55" stop-color="#2a6fb0"/><stop offset="1" stop-color="#123d6e"/></radialGradient>
  <radialGradient id="orbGlow" cx=".5" cy="1" r=".6"><stop offset="0" stop-color="#5fe0ff" stop-opacity=".95"/><stop offset="1" stop-color="#2aa0e0" stop-opacity="0"/></radialGradient>
  <linearGradient id="orbHi" x1="0" y1="0" x2="0" y2="1"><stop offset="0" stop-color="#fff" stop-opacity=".75"/><stop offset="1" stop-color="#fff" stop-opacity=".12"/></linearGradient>
  <linearGradient id="fR" x1="0" y1="0" x2="1" y2="1"><stop offset="0" stop-color="#e8441c"/><stop offset="1" stop-color="#f6a21c"/></linearGradient>
  <linearGradient id="fG" x1="0" y1="0" x2="1" y2="1"><stop offset="0" stop-color="#a6cf4a"/><stop offset="1" stop-color="#3f9b35"/></linearGradient>
  <linearGradient id="fB" x1="0" y1="0" x2="1" y2="1"><stop offset="0" stop-color="#7ac0f0"/><stop offset="1" stop-color="#2a6ec6"/></linearGradient>
  <linearGradient id="fY" x1="0" y1="0" x2="1" y2="1"><stop offset="0" stop-color="#ffd84a"/><stop offset="1" stop-color="#f29a1c"/></linearGradient>
  <linearGradient id="ieG" x1="0" y1="0" x2="0" y2="1"><stop offset="0" stop-color="#8fe0fb"/><stop offset=".5" stop-color="#39b4ee"/><stop offset="1" stop-color="#1b8bd6"/></linearGradient>
  <linearGradient id="fold" x1="0" y1="0" x2="0" y2="1"><stop offset="0" stop-color="#fbeeb0"/><stop offset="1" stop-color="#edc95e"/></linearGradient>
  <linearGradient id="npG" x1="0" y1="0" x2="0" y2="1"><stop offset="0" stop-color="#ffffff"/><stop offset=".35" stop-color="#e8f4d8"/><stop offset=".7" stop-color="#8fd03a"/><stop offset="1" stop-color="#2f9e18"/></linearGradient>
  <linearGradient id="flG" x1="0" y1="0" x2="0" y2="1"><stop offset="0" stop-color="#e81818"/><stop offset="1" stop-color="#8a0a0a"/></linearGradient>
  <linearGradient id="nbG" x1="0" y1="0" x2="1" y2="1"><stop offset="0" stop-color="#bfe6f4"/><stop offset=".5" stop-color="#66b4d6"/><stop offset="1" stop-color="#3f8fba"/></linearGradient>
  <radialGradient id="itG" cx=".5" cy=".75" r=".8"><stop offset="0" stop-color="#48c4ff"/><stop offset=".5" stop-color="#1c78dc"/><stop offset="1" stop-color="#0c3c9c"/></radialGradient>
  <linearGradient id="xlG" x1="0" y1="0" x2="1" y2="1"><stop offset="0" stop-color="#e6f4dc"/><stop offset=".5" stop-color="#a8d890"/><stop offset="1" stop-color="#4aa63c"/></linearGradient>
</defs>
<!-- Start orb -->
<circle cx="27" cy="1030" r="18.6" fill="#0f2f55" opacity=".55"/>
<circle cx="27" cy="1030" r="17.6" fill="url(#orbG)" stroke="#a9d2ee" stroke-opacity=".55" stroke-width="1"/>
<circle cx="27" cy="1030" r="17" fill="url(#orbGlow)"/>
<path d="M10.5,1028 A16.5 16.5 0 0 1 43.5,1028 C36,1024 18,1024 10.5,1028 Z" fill="url(#orbHi)" opacity=".7"/>
<g transform="translate(27.2,1030) scale(1.09) translate(-25.6,-1030.4)">
<path d="M19.4,1021.6 C21.6,1019.8 24.4,1020.2 26.6,1021.8 L24.6,1029.4 C22.4,1027.8 19.8,1027.6 17.4,1029.2 Z" fill="url(#fR)"/>
<path d="M28.4,1022.4 C30.8,1023.8 33.6,1023.8 36.2,1022 L34.2,1029.6 C31.8,1031.4 28.8,1031.2 26.4,1030 Z" fill="url(#fG)"/>
<path d="M16.8,1031.2 C19.2,1029.6 21.8,1029.8 24,1031.4 L22,1039 C19.8,1037.4 17.2,1037.2 14.8,1038.8 Z" fill="url(#fB)"/>
<path d="M25.8,1032 C28.2,1033.4 31.2,1033.4 33.6,1031.6 L31.6,1039.2 C29.2,1041 26.2,1040.8 23.8,1039.6 Z" fill="url(#fY)"/>
</g>
<!-- IE -->
<g>
  <path d="M89.6,1017.4 C96.8,1017.4 102.6,1022.8 102.8,1031.6 L85.4,1031.6 C85.8,1034.8 88,1036.8 91.2,1036.8 C93.8,1036.8 95.8,1035.8 97,1033.8 L102.2,1035.4 C100.2,1039.8 96,1042.4 90.4,1042.4 C82.4,1042.4 76.8,1037 76.8,1029.8 C76.8,1022.8 82.2,1017.4 89.6,1017.4 Z M85.6,1027.4 L95.2,1027.4 C94.8,1024.4 92.8,1022.6 90.2,1022.6 C87.6,1022.6 85.8,1024.6 85.6,1027.4 Z" fill="url(#ieG)" stroke="#7fd4f6" stroke-width=".6"/>
  <path d="M76.2,1042.6 C72.6,1038.6 75.6,1030 82.6,1023.4 C89.6,1016.8 98.4,1013.8 102,1016.2 C103.6,1017.4 103.6,1019.4 103,1021.6" fill="none" stroke="#f6c21a" stroke-width="2.2" stroke-linecap="round"/>
  <path d="M76.2,1042.6 C77.8,1044.4 81.4,1044 85,1042.6" fill="none" stroke="#f6c21a" stroke-width="1.8" stroke-linecap="round"/>
</g>
<!-- WMP -->
<g>
  <rect x="141" y="1020.4" width="21.4" height="21.6" fill="#8fbfe8" opacity=".55"/>
  <rect x="137.6" y="1019.4" width="21.6" height="22.6" fill="#7db4e6" stroke="#a9d0f2" stroke-width=".6"/>
  <circle cx="147.6" cy="1030.6" r="8.8" fill="#f4801c"/>
  <circle cx="147.6" cy="1030.6" r="8.8" fill="none" stroke="#fba85a" stroke-width=".8"/>
  <polygon points="144.4,1025.4 144.4,1035.8 153.6,1030.6" fill="#fff"/>
</g>
<!-- Explorer -->
<g>
  <path d="M197.4,1021 L197.4,1019 C197.4,1018 198,1017.4 199,1017.4 L205.6,1017.4 L207.6,1019.8 L226,1019.8 C227,1019.8 227.6,1020.4 227.6,1021.4 L227.6,1042 L197.4,1042 Z" fill="#e9c65c"/>
  <rect x="200.4" y="1018.6" width="24" height="8" fill="#fff" stroke="#d8d2b8" stroke-width=".4"/>
  <rect x="201.6" y="1018.2" width="2.8" height="2" fill="#1faa2a"/>
  <rect x="209.6" y="1020.2" width="2.6" height="2.4" fill="#d42a1c"/>
  <rect x="217.6" y="1022.4" width="2.8" height="2" fill="#2a8ae6"/>
  <path d="M197.4,1024.6 L208,1024.6 L210,1027 L228.6,1027 L228.6,1043.6 C228.6,1044.2 228.2,1044.6 227.6,1044.6 L198.4,1044.6 C197.8,1044.6 197.4,1044.2 197.4,1043.6 Z" fill="url(#fold)" stroke="#d8b24a" stroke-width=".5"/>
  <path d="M202.6,1045.6 L202.6,1037.4 C202.6,1035.6 203.8,1034.6 205.4,1034.6 L221,1034.6 C222.6,1034.6 223.8,1035.6 223.8,1037.4 L223.8,1045.6 L219.2,1045.6 L219.2,1040.2 L207.2,1040.2 L207.2,1045.6 Z" fill="#8fd0f2" stroke="#d6f0fc" stroke-width=".8"/>
  <path d="M204,1038 l5,-5 M204.6,1033 l.6,7" stroke="#fff" stroke-width=".8" opacity=".9"/>
</g>
<!-- Chrome -->
<g>
  <circle cx="275" cy="1030" r="15" fill="#dd4b3e"/>
  <path d="M275,1030 L262,1022.5 A15 15 0 0 0 276.2,1044.95 L282.5,1034 Z" fill="#1fa463"/>
  <path d="M275,1030 L288,1022.5 A15 15 0 0 1 276.2,1044.95 Z" fill="#ffce44"/>
  <path d="M262,1022.5 A15 15 0 0 1 288,1022.5 L275,1022.5 Z" fill="#dd4b3e"/>
  <circle cx="275" cy="1030" r="7" fill="#f4f4f4"/>
  <circle cx="275" cy="1030" r="5.6" fill="#4a8af4"/>
</g>
<!-- Notepad++ -->
<g>
  <path d="M323,1015 L340,1015 L345,1020 L345,1044.6 L323,1044.6 Z" fill="url(#npG)" stroke="#7a7a7a" stroke-width=".7"/>
  <path d="M340,1015 L340,1020 L345,1020 Z" fill="#d8d8d8" stroke="#7a7a7a" stroke-width=".5"/>
  <path d="M325,1017.4 h13 M325,1019.4 h13 M325,1021.4 h17" stroke="#9ab0c4" stroke-width=".6"/>
  <path d="M329,1033 L329,1025 C329,1023 332.6,1023 332.6,1025 L332.6,1033" fill="none" stroke="#111" stroke-width="1.3"/>
  <path d="M334.4,1028.6 h4 M336.4,1026.6 v4 M339.2,1028.6 h4 M341.2,1026.6 v4" stroke="#111" stroke-width="1.1"/>
  <path d="M348.6,1015.4 L351.4,1017 L340.6,1038 L337.6,1040.4 L337.8,1036.4 Z" fill="#f0a81c" stroke="#9a6a10" stroke-width=".5"/>
  <path d="M348.6,1015.4 L351.4,1017 L350.4,1019 L347.6,1017.4 Z" fill="#c8384a"/>
  <path d="M337.8,1036.4 L340.6,1038 L337.6,1040.4 Z" fill="#3a2a1a"/>
</g>
<!-- Fl -->
<g>
  <rect x="386" y="1015.6" width="26.4" height="24.8" fill="#2d1616" stroke="#e8141c" stroke-width="2"/>
  <text x="391.4" y="1034.6" font-family="'Liberation Sans',sans-serif" font-size="18" font-weight="bold" fill="#ee1c24" letter-spacing=".6">Fl</text>
</g>
<!-- Acrobat -->
<g>
  <rect x="447.4" y="1016" width="28.4" height="26.6" fill="#6a6a6a" opacity=".45"/>
  <rect x="446.4" y="1015.2" width="28.6" height="26.6" fill="#f8f8f8"/>
  <rect x="446.4" y="1014.6" width="26.4" height="2.2" fill="#e01414"/>
  <path d="M451.6,1037.6 C454,1037 457.6,1032.4 460,1026.6 C461.6,1022.6 461.8,1019.4 460.6,1019.2 C459.4,1019 459.4,1022.8 461.2,1026.6 C463.2,1030.8 467.6,1033.600 471,1033.4 C473,1033.2 472,1031.4 468,1031.600 C463,1031.8 456.4,1034 453.200,1036 C451,1037.400 450.600,1038.200 451.6,1037.6 Z" fill="none" stroke="#d81a1a" stroke-width="1.3"/>
</g>
<!-- Notepad -->
<g>
  <path d="M519.600,1017.6 L536.4,1020.6 L537.4,1041 L529.4,1044.4 L507.6,1037.4 Z" fill="#e8eef2" stroke="#b8c4cc" stroke-width=".5"/>
  <path d="M534.600,1020.400 L537.200,1021 L538,1041 L535,1042.4 Z" fill="#c8a050"/>
  <path d="M519.400,1017.2 L534,1019.800 L527.600,1041.800 L507.400,1036.400 Z" fill="url(#nbG)"/>
  <path d="M520,1016.400 l14,2.600" stroke="#8a8a8a" stroke-width="1.600" stroke-dasharray=".8 1"/>
  <path d="M528.600,1042.600 L535,1022 " stroke="#fff" stroke-width=".5" opacity=".7"/>
</g>
<!-- Calculator -->
<g>
  <rect x="573.8" y="1015.800" width="21.4" height="28.4" rx="1.600" fill="#dbe8f4" stroke="#8fb0d0" stroke-width=".7"/>
  <rect x="575.8" y="1017.800" width="17.4" height="2" fill="#f4b04a"/>
  <rect x="575.8" y="1019.800" width="17.4" height="7.600" fill="#eef4fb" stroke="#9ab4d0" stroke-width=".5"/>
  <text x="587.4" y="1026.4" font-family="'Liberation Mono',monospace" font-size="7.5" font-weight="bold" fill="#3a5a9a">0</text>
  <g fill="#fff" stroke="#8fb0d0" stroke-width=".4">
    <rect x="576" y="1030" width="2.600" height="2.400"/><rect x="579.800" y="1030" width="2.600" height="2.400"/><rect x="583.600" y="1030" width="2.600" height="2.400"/><rect x="587.400" y="1030" width="2.600" height="2.400"/><rect x="591" y="1030" width="2.400" height="2.400"/>
    <rect x="576" y="1033.600" width="2.600" height="2.400"/><rect x="579.800" y="1033.600" width="2.600" height="2.400"/><rect x="583.600" y="1033.600" width="2.600" height="2.400"/><rect x="587.400" y="1033.600" width="2.600" height="2.400"/><rect x="591" y="1033.600" width="2.400" height="2.400"/>
    <rect x="576" y="1037.200" width="2.600" height="2.400"/><rect x="579.800" y="1037.200" width="2.600" height="2.400"/><rect x="583.600" y="1037.200" width="2.600" height="2.400"/><rect x="587.400" y="1037.200" width="2.600" height="2.400"/>
    <rect x="576" y="1040.800" width="2.600" height="2.200"/><rect x="579.800" y="1040.800" width="2.600" height="2.200"/><rect x="583.600" y="1040.800" width="2.600" height="2.200"/><rect x="587.400" y="1040.800" width="2.600" height="2.200"/>
  </g>
  <rect x="591" y="1037.200" width="2.400" height="5.800" fill="#f4a02a"/>
</g>
<!-- Ps -->
<g>
  <rect x="634" y="1015.600" width="26.600" height="25.200" fill="#0b1e2a" stroke="#14c8fa" stroke-width="2"/>
  <text x="638" y="1035.400" font-family="'Liberation Sans',sans-serif" font-size="17.500" fill="#1fcaf8" textLength="19" lengthAdjust="spacingAndGlyphs">Ps</text>
</g>
<!-- Ai -->
<g>
  <rect x="696" y="1015.600" width="26.400" height="25.600" fill="#2a1402" stroke="#ff7f1a" stroke-width="2"/>
  <text x="701" y="1034.400" font-family="'Liberation Sans',sans-serif" font-size="17.500" fill="#ff8a1f" textLength="17" lengthAdjust="spacingAndGlyphs">Ai</text>
</g>
<!-- IL-2 viewer star -->
<g>
  <polygon points="770.800,1015.400 774.600,1026.400 786.400,1026.600 777,1033.800 780.600,1045.200 770.800,1038.200 761.200,1045.200 764.600,1033.800 755.800,1026.600 767.200,1026.400" fill="#c40808"/>
  <polygon points="770.800,1015.400 770.800,1038.200 761.200,1045.200 764.600,1033.800 755.800,1026.600 767.200,1026.400" fill="#f2f2f2" stroke="#8a8a8a" stroke-width=".5"/>
  <path d="M759,1028.400 h11.800 M762,1031.400 h8.800 M764.600,1034.400 h6.200 M763.600,1037.400 h7.200 M762.800,1040.600 h4.600 M768,1023 v17 M765,1027 v15 M762,1027 v4" stroke="#6a6a6a" stroke-width=".6" fill="none"/>
</g>
<!-- iTunes -->
<g>
  <circle cx="833.300" cy="1030" r="15.400" fill="#e9edf2" stroke="#7a8494" stroke-width=".6"/>
  <circle cx="833.300" cy="1030" r="13.400" fill="url(#itG)"/>
  <path d="M821,1026 A12.600 12.600 0 0 1 845.600,1026 C838,1022.500 828,1022.500 821,1026 Z" fill="#fff" opacity=".35"/>
  <path d="M830.200,1022.600 L840.200,1020.400 L840.200,1033.600 C840.200,1035.600 838.400,1036.800 836.400,1036.800 C834.600,1036.800 833.400,1035.800 833.400,1034.400 C833.400,1032.800 835,1031.600 837,1031.600 C837.600,1031.600 838,1031.700 838.400,1031.900 L838.400,1024.400 L832,1025.800 L832,1035.600 C832,1037.600 830.200,1038.800 828.200,1038.800 C826.400,1038.800 825.200,1037.800 825.200,1036.400 C825.200,1034.800 826.800,1033.600 828.800,1033.600 C829.400,1033.600 829.800,1033.700 830.200,1033.900 Z" fill="#101418"/>
</g>
<!-- compass + star -->
<g>
  <path d="M894.600,1016 L880,1046 M895.400,1016 L910,1046" stroke="#33363a" stroke-width="1.700" fill="none"/>
  <rect x="893.400" y="1014" width="3.200" height="8" fill="#33363a"/>
  <path d="M892,1021 h6" stroke="#33363a" stroke-width="1.400"/>
  <polygon points="895,1032.600 896.800,1037.400 901.800,1037.500 897.800,1040.600 899.300,1045.600 895,1042.600 890.700,1045.600 892.200,1040.600 888.200,1037.500 893.200,1037.400" fill="#d8101c"/>
</g>
<!-- Excel -->
<g>
  <rect x="941.600" y="1014.600" width="28" height="28" rx="2" fill="url(#xlG)" stroke="#2a7a2a" stroke-width="1"/>
  <path d="M946.400,1019.400 L951.600,1019.400 L955.200,1025.400 L958.800,1019.400 L963.600,1019.400 L957.800,1028.400 L964,1038 L958.800,1038 L955,1031.600 L951,1038 L946,1038 L952.400,1028.400 Z" fill="#1f6a28"/>
  <path d="M947,1040 L971.800,1031 L968.400,1044 L944.800,1044.400 Z" fill="#f4f8f0" stroke="#b8d0b0" stroke-width=".4"/>
  <path d="M957,1030.400 L971.400,1032 L969,1041 L955,1038 Z" fill="#f4f8f0" stroke="#b8d0b0" stroke-width=".4"/>
  <path d="M959,1033 l10,1.400 M958.400,1035.600 l10,1.400 M950,1040.600 l16,-.6 M949,1042.600 l17,-.4" stroke="#6fb860" stroke-width=".9"/>
</g>
<!-- Flash player -->
<g>
  <rect x="1004.800" y="1015.600" width="30" height="28.600" rx="1.500" fill="url(#flG)"/>
  <rect x="1004.800" y="1015" width="28" height="1.600" fill="#c8c8c8" opacity=".6"/>
  <path d="M1028.600,1021 C1023.400,1021 1021.400,1024 1020,1028 L1024.200,1028 L1024.200,1031.200 L1018.800,1031.200 C1017.400,1035 1015.800,1038.600 1011.600,1038.600 L1011.600,1035.400 C1013.800,1035.400 1014.800,1033 1016,1029.600 C1017.800,1024.400 1020.600,1017.800 1028.600,1017.800 Z" fill="#f6ecec"/>
</g>
<!-- ship wheel -->
<g>
  <circle cx="1081" cy="1030" r="15" fill="#f6871a"/>
  <path d="M1070,1040.400 A15 15 0 0 0 1092,1040.400 A15 15 0 0 0 1094,1023 Z" fill="#e6740e" opacity=".6"/>
  <circle cx="1081" cy="1030" r="7.600" fill="none" stroke="#fff" stroke-width="2.400"/>
  <circle cx="1081" cy="1030" r="2.200" fill="#fff"/>
  <path d="M1081,1019 v22 M1070,1030 h22 M1073.200,1022.200 l15.600,15.600 M1088.800,1022.200 l-15.600,15.600" stroke="#fff" stroke-width="1.500" stroke-linecap="round"/>
</g>
<!-- tray -->
<g fill="#fff">
  <polygon points="1521.600,1033 1529.400,1033 1525.500,1029" />
  <rect x="1542.600" y="1035" width="1.600" height="1.600"/><rect x="1545" y="1033.200" width="1.800" height="3.400"/><rect x="1547.600" y="1031" width="1.800" height="5.600"/><rect x="1550.200" y="1028.600" width="1.800" height="8"/>
  <rect x="1553" y="1025.600" width="2.400" height="11" fill="#b0bccc" stroke="#e6eaf0" stroke-width=".5"/>
  <path d="M1566.600,1028 L1569.400,1028 L1573.200,1024.400 L1573.200,1037.600 L1569.400,1034 L1566.600,1034 Z"/>
</g>
<path d="M1575.600,1028.400 C1576.800,1029.800 1576.800,1032.200 1575.600,1033.600 M1577.800,1026.600 C1580,1029 1580,1033 1577.800,1035.400 M1580,1025 C1583,1028.400 1583,1033.600 1580,1037" fill="none" stroke="#fff" stroke-width=".9" opacity=".9"/>
</svg>
<span class="t" style="left:1490.50px;top:1022.00px;font-size:11.5px;line-height:11.5px;letter-spacing:-1.875px;color:#fff;">EN</span>
<span class="t" style="left:1613.60px;top:1017.00px;font-size:12px;line-height:12px;letter-spacing:-0.757px;color:#fff;">20:38</span>
<span class="t" style="left:1599.60px;top:1034.00px;font-size:12px;line-height:12px;letter-spacing:-0.574px;color:#fff;">07.11.2018</span>
<!-- show desktop -->
<div style="left:1665px;top:1011px;width:15px;height:39px;border:1px solid rgba(10,30,60,.8);background:linear-gradient(135deg,rgba(160,190,220,.55),rgba(40,80,130,.35) 60%,rgba(20,50,95,.4));box-shadow:inset 0 0 0 1px rgba(255,255,255,.35);"></div>

</body></html>
